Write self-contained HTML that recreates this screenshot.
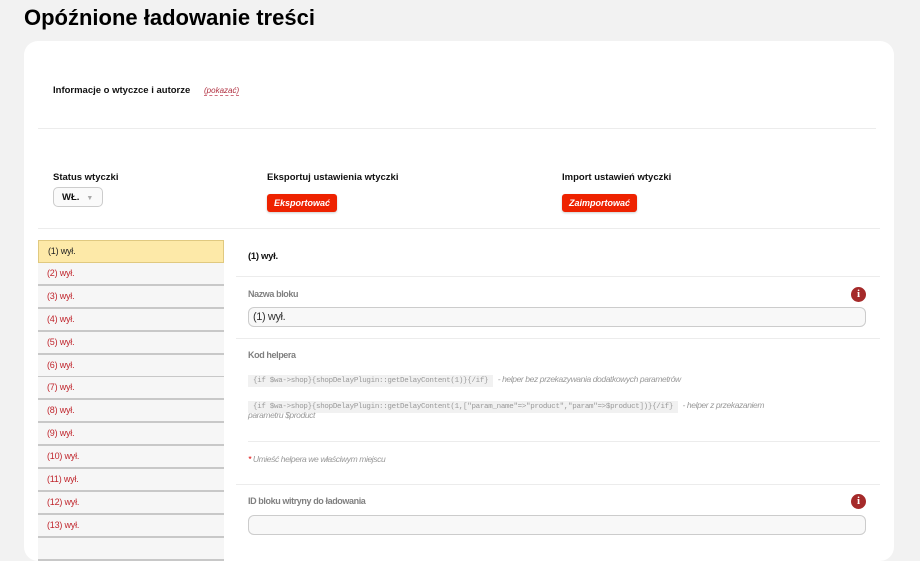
<!DOCTYPE html>
<html><head><meta charset="utf-8"><style>
*{margin:0;padding:0;box-sizing:border-box}
body{width:920px;height:543px;overflow:hidden;background:#f2f2f2;font-family:"Liberation Sans",sans-serif;position:relative;color:#111}
.a{position:absolute;white-space:nowrap}
h1{position:absolute;left:24px;top:5px;font-size:22px;font-weight:bold;color:#000}
.card{position:absolute;left:24px;top:41px;width:870px;height:520px;background:#fff;border-radius:14px}
.hr{position:absolute;height:1px;background:#ececec}
.b{font-size:10px;font-weight:bold}
.btn{position:absolute;background:#ee2200;color:#fff;font-size:9px;font-weight:bold;font-style:italic;border-radius:3px;height:18px;line-height:18px;padding:0 7px;box-shadow:0 1px 2px rgba(0,0,0,.2)}
.it{position:absolute;left:38px;width:186px;height:23px;background:#f6f6f6;border-bottom:2px solid #c8c8c8;color:#c0262d;font-size:9px;line-height:21px;padding-left:9px;letter-spacing:-0.2px}
.lab{font-size:9px;color:#808080;font-weight:bold;letter-spacing:-0.4px}
.inp{position:absolute;left:248px;width:618px;height:20px;border:1px solid #ccc;border-radius:6px;background:#f8f8f8;font-size:11px;line-height:18px;padding-left:4px;color:#333;letter-spacing:-0.4px}
.code{background:#f1f1f1;font-family:"Liberation Mono",monospace;font-size:7.5px;letter-spacing:-0.3px;color:#999;padding:2px 5px}
.g{color:#999;font-style:italic;font-size:8.5px;letter-spacing:-0.4px}
.info{position:absolute;width:15px;height:15px;border-radius:50%;background:#a52a2a;color:#fff;font-size:11px;font-weight:bold;text-align:center;line-height:15px;font-family:"Liberation Serif",serif}
</style></head><body>
<h1>Opóźnione ładowanie treści</h1>
<div class="card"></div>
<div class="a b" style="left:53px;top:85px;font-size:9.5px">Informacje o wtyczce i autorze</div>
<div class="a" style="left:204px;top:86px;font-size:8px;font-style:italic;color:#b03040;border-bottom:1px dashed #d07080">(pokazać)</div>
<div class="hr" style="left:38px;top:128px;width:838px"></div>
<div class="a b" style="left:53px;top:172px;font-size:9.5px">Status wtyczki</div>
<div class="a" style="left:53px;top:187px;width:50px;height:20px;border:1px solid #ccc;border-radius:5px;font-size:9.5px;font-weight:bold;padding:4px 0 0 8px;background:#fafafa">WŁ.<span style="color:#aaa;font-size:7px;margin-left:7px">▼</span></div>
<div class="a b" style="left:267px;top:172px;font-size:9.5px">Eksportuj ustawienia wtyczki</div>
<div class="btn" style="left:267px;top:194px">Eksportować</div>
<div class="a b" style="left:562px;top:172px;font-size:9.5px">Import ustawień wtyczki</div>
<div class="btn" style="left:562px;top:194px">Zaimportować</div>
<div class="hr" style="left:38px;top:228px;width:842px"></div>

<div class="it" style="top:240px;background:#fde9a8;border:1px solid #e0c980;color:#222">(1) wył.</div>
<div class="it" style="top:263px">(2) wył.</div>
<div class="it" style="top:286px">(3) wył.</div>
<div class="it" style="top:309px">(4) wył.</div>
<div class="it" style="top:332px">(5) wył.</div>
<div class="it" style="top:355px">(6) wył.</div>
<div class="it" style="top:377px">(7) wył.</div>
<div class="it" style="top:400px">(8) wył.</div>
<div class="it" style="top:423px">(9) wył.</div>
<div class="it" style="top:446px">(10) wył.</div>
<div class="it" style="top:469px">(11) wył.</div>
<div class="it" style="top:492px">(12) wył.</div>
<div class="it" style="top:515px">(13) wył.</div>
<div class="it" style="top:538px"></div>

<div class="a b" style="left:248px;top:251px;font-size:9.5px;letter-spacing:-0.3px">(1) wył.</div>
<div class="hr" style="left:236px;top:276px;width:644px"></div>
<div class="a lab" style="left:248px;top:289px">Nazwa bloku</div>
<div class="info" style="left:851px;top:287px">i</div>
<div class="inp" style="top:307px">(1) wył.</div>
<div class="hr" style="left:236px;top:338px;width:644px"></div>
<div class="a lab" style="left:248px;top:350px">Kod helpera</div>
<div class="a" style="left:248px;top:369px"><span class="code">{if $wa-&gt;shop}{shopDelayPlugin::getDelayContent(1)}{/if}</span> <span class="g">- helper bez przekazywania dodatkowych parametrów</span></div>
<div class="a" style="left:248px;top:395px"><span class="code">{if $wa-&gt;shop}{shopDelayPlugin::getDelayContent(1,["param_name"=&gt;"product","param"=&gt;$product])}{/if}</span> <span class="g">- helper z przekazaniem</span></div>
<div class="a g" style="left:248px;top:410px">parametru $product</div>
<div class="hr" style="left:248px;top:441px;width:632px"></div>
<div class="a g" style="left:248px;top:454px"><span style="color:#d00">*</span> Umieść helpera we właściwym miejscu</div>
<div class="hr" style="left:236px;top:484px;width:644px"></div>
<div class="a lab" style="left:248px;top:496px">ID bloku witryny do ładowania</div>
<div class="info" style="left:851px;top:494px">i</div>
<div class="inp" style="top:515px"></div>
</body></html>
